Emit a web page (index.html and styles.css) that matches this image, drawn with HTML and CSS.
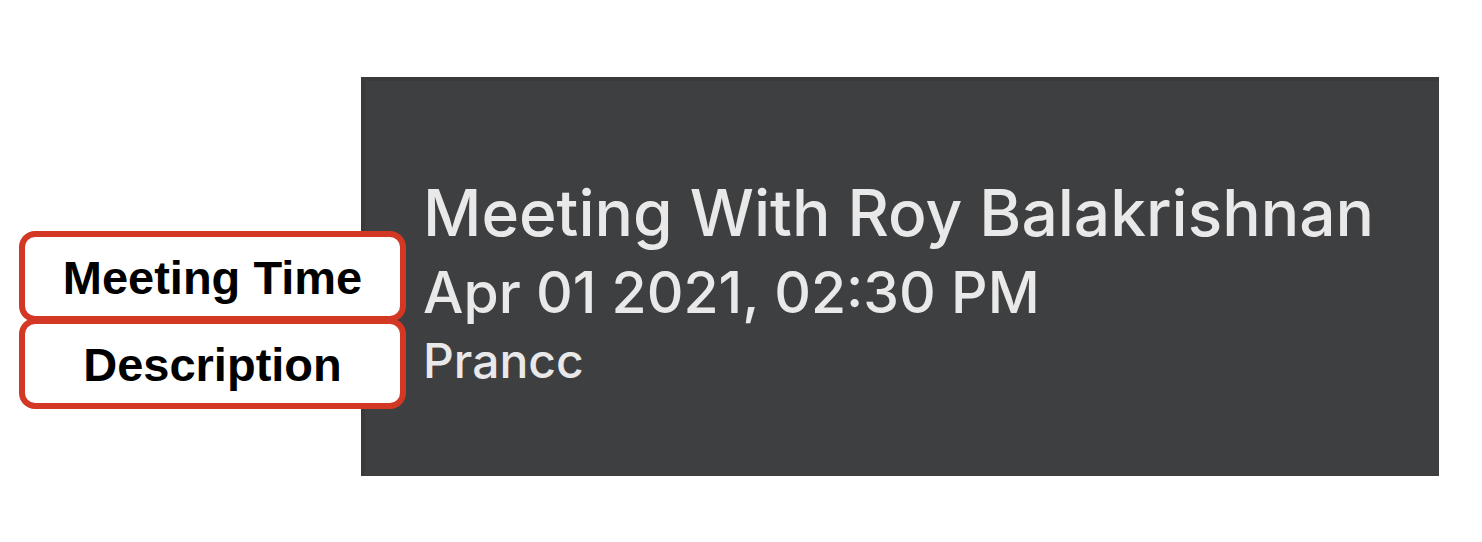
FILE: index.html
```
<!DOCTYPE html>
<html lang="en">
<head>
<meta charset="utf-8">
<title>Meeting details</title>
<link rel="stylesheet" href="styles.css">
</head>
<body>
<main class="page">
  <section class="card">
    <h1 class="title">Meeting With Roy Balakrishnan</h1>
    <p class="time">Apr 01 2021, 02:30 PM</p>
    <p class="description">Prancc</p>
  </section>
  <aside class="labels">
    <div class="label">Meeting Time</div>
    <div class="label">Description</div>
  </aside>
</main>
</body>
</html>
```
FILE: styles.css
```
* { box-sizing: border-box; }
body { margin: 0; background: #fff; }
.page {
  position: relative;
  padding: 77px 43px 66px 361px;
}
.card {
  padding: 92px 60px 87px 58px;
  border-top: 4px solid #3a3a3a;
  border-left: 4px solid #3a3a3a;
  background: #3e3f41;
  color: #e9e9e9;
  font-family: Inter, "Liberation Sans", sans-serif;
  white-space: nowrap;
}
.title, .time, .description { margin: 0; font-weight: 500; }
.title { font-size: 64px; line-height: 80px; }
.time { font-size: 57px; line-height: 80px; }
.description { font-size: 48px; line-height: 56px; }
.labels {
  position: absolute;
  left: 19px;
  top: 231px;
  width: 387px;
}
.label {
  height: 91px;
  border: 6px solid #d23824;
  border-radius: 16px;
  background: #fff;
  color: #000;
  font: bold 47px/82px "Liberation Sans", Arial, sans-serif;
  text-align: center;
}
.label + .label { margin-top: -4px; }
```
